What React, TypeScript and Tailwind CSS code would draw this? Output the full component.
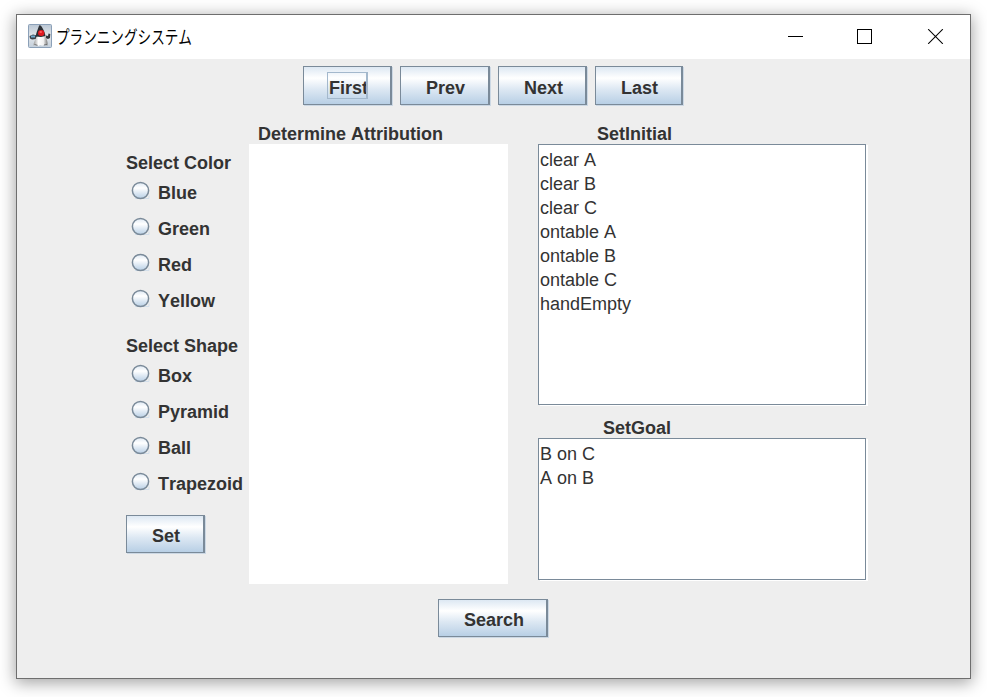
import type { ReactNode } from "react";

const ocean = "bg-[linear-gradient(#dde8f3,#ffffff_30%,#dde8f3_60%,#b8cfe5)]";

function MetalButton({ className, children }: { className: string; children: ReactNode }) {
  return (
    <button
      className={`${ocean} ${className} flex shrink-0 items-start border border-r-2 border-[#7a8a99] text-left text-[18px] leading-5 font-bold shadow-[1px_1px_0_#ccd8e4]`}
    >
      {children}
    </button>
  );
}

function RadioGroup({ title, options }: { title: string; options: string[] }) {
  return (
    <fieldset className="h-[183px]">
      <legend className="h-5 text-[18px] leading-5 font-bold">{title}</legend>
      {options.map((option) => (
        <label key={option} className="flex h-9 items-start pl-[5px]">
          <svg width="19" height="19" viewBox="0 0 19 19" className="mt-2 shrink-0">
            <defs>
              <linearGradient id={`fill-${option}`} x1="0" y1="0" x2="0" y2="1">
                <stop offset="0" stopColor="#dde8f3" />
                <stop offset="0.35" stopColor="#ffffff" />
                <stop offset="0.65" stopColor="#dde8f3" />
                <stop offset="1" stopColor="#b8cfe5" />
              </linearGradient>
            </defs>
            <path d="M4 17.5h14v-3" fill="none" stroke="#d3dfeb" />
            <circle cx="9.5" cy="9.5" r="8.1" fill={`url(#fill-${option})`} stroke="#7a8a99" strokeWidth="1.5" />
          </svg>
          <span className="mt-2.5 ml-2 text-[18px] leading-5 font-bold whitespace-nowrap">{option}</span>
        </label>
      ))}
    </fieldset>
  );
}

function ListBox({ className, items }: { className: string; items: string[] }) {
  return (
    <ul className={`${className} border border-[#7a8a99] bg-white pt-[3px] pl-px text-[18px] leading-6 shadow-[2px_1px_0_#ffffff]`}>
      {items.map((item) => (
        <li key={item} className="h-6 whitespace-nowrap">{item}</li>
      ))}
    </ul>
  );
}

function DukeIcon() {
  return (
    <svg width="24" height="24" viewBox="0 0 24 24" className="shrink-0">
      <defs>
        <linearGradient id="tile" x1="0" y1="0" x2="0" y2="1">
          <stop offset="0" stopColor="#b9c6d4" />
          <stop offset="0.5" stopColor="#e4e7ea" />
          <stop offset="1" stopColor="#c3cfdb" />
        </linearGradient>
        <linearGradient id="belly" x1="0" y1="0" x2="1" y2="0">
          <stop offset="0" stopColor="#9a9a9a" />
          <stop offset="0.35" stopColor="#ffffff" />
          <stop offset="0.7" stopColor="#f1f1f1" />
          <stop offset="1" stopColor="#777777" />
        </linearGradient>
      </defs>
      <rect x="0.5" y="0.5" width="23" height="23" rx="1" fill="url(#tile)" stroke="#8ba0b8" />
      <path d="M1.500 12 5 10.500 9 11.500 8 15l-4 .5-2-1z" fill="#3a4047" />
      <path d="M3 11.500h4v2H3z" fill="#6fa9cc" />
      <path d="M18 11.500l2 .5.500-2.500 1.800.5-.3 4-2 1-2.500-1z" fill="#33373c" />
      <path d="M5.500 21.500c0-2.500 1.300-5.500 3.500-9l8-.5c2 3 3 6.500 2.500 9.500l-3.200-.7-2 1-2-.8-2.300.9-2-.9z" fill="url(#belly)" />
      <path d="M6.500 20.500l3 .8M16 21l3-.5" stroke="#666666" strokeWidth="0.9" />
      <path d="M11.300 1.500c1-.8 2.400.8 3.700 3.500 1.200 2.500 2.200 4.500 2.500 7l-4.500 1-5.300-.5c.2-2 1-4.500 1.800-6.500.6-1.800 1.200-3.500 1.800-4.500z" fill="#2c2f34" />
      <ellipse cx="13.200" cy="9" rx="3.200" ry="2.900" fill="#e0181f" />
      <ellipse cx="12.700" cy="8" rx="1.300" ry="0.900" fill="#ff5a5a" />
    </svg>
  );
}

function TitleBar() {
  return (
    <header className="flex h-11 items-start bg-white">
      <div className="flex w-[771px] pt-[9px] pl-[11px]">
        <DukeIcon />
        <h1 className="ml-1 h-6 w-[136px] origin-left scale-x-[0.755] text-[18px] leading-6 font-normal whitespace-nowrap text-black [font-family:'Noto_Sans_CJK_JP',sans-serif]">
          プランニングシステム
        </h1>
      </div>
      <svg width="156" height="15" viewBox="0 0 156 15" className="mt-3.5 shrink-0" fill="none" stroke="#000000">
        <path d="M0 7.500h15" shapeRendering="crispEdges" />
        <path d="M69.500.5h14v14h-14z" shapeRendering="crispEdges" />
        <path d="m140.200.2 14.600 14.600m0-14.600-14.600 14.600" strokeWidth="1.100" />
      </svg>
    </header>
  );
}

export default function App() {
  return (
    <div className="h-[697px] w-[987px] overflow-hidden bg-white pt-3.5 pl-4 text-[#333333] [font-family:'Liberation_Sans',Arial,sans-serif] [font-kerning:none]">
      <main className="h-[665px] w-[955px] border border-[#6e6e6e] bg-[#eeeeee] shadow-[0_3px_15px_1px_rgba(0,0,0,0.36)]">
        <TitleBar />
        <nav className="flex h-[65px] items-start pt-[7px] pl-[286px]">
          <MetalButton className="mr-2 h-[39px] w-[89px] pt-[5px] pl-[23px]">
            <span className="block h-[27px] w-[41px] overflow-hidden border border-r-2 border-[#a3b8cc] pt-[5px] pl-px whitespace-nowrap">
              First
            </span>
          </MetalButton>
          <MetalButton className="mr-2 h-[39px] w-[90px] pt-[11px] pl-[25px]">Prev</MetalButton>
          <MetalButton className="mr-2 h-[39px] w-[89px] pt-[11px] pl-[25px]">Next</MetalButton>
          <MetalButton className="h-[39px] w-[88px] pt-[11px] pl-[25px]">Last</MetalButton>
        </nav>
        <div className="flex h-[475px] pl-[109px]">
          <section className="w-[123px] pt-[29px]">
            <RadioGroup title="Select Color" options={["Blue", "Green", "Red", "Yellow"]} />
            <RadioGroup title="Select Shape" options={["Box", "Pyramid", "Ball", "Trapezoid"]} />
            <MetalButton className="-mt-1 h-[38px] w-[79px] pt-[10px] pl-[25px]">Set</MetalButton>
          </section>
          <section className="w-[259px]">
            <h2 className="h-5 pl-[9px] text-[18px] leading-5 font-bold">Determine Attribution</h2>
            <div className="h-[440px] bg-white" />
          </section>
          <section className="ml-[30px] w-[328px]">
            <h2 className="h-5 pl-[59px] text-[18px] leading-5 font-bold">SetInitial</h2>
            <ListBox
              className="h-[261px]"
              items={["clear A", "clear B", "clear C", "ontable A", "ontable B", "ontable C", "handEmpty"]}
            />
            <h2 className="mt-[13px] h-5 pl-[65px] text-[18px] leading-5 font-bold">SetGoal</h2>
            <ListBox className="h-[142px]" items={["B on C", "A on B"]} />
          </section>
        </div>
        <footer className="flex pl-[421px]">
          <MetalButton className="h-[38px] w-[110px] pt-[10px] pl-[25px]">Search</MetalButton>
        </footer>
      </main>
    </div>
  );
}
